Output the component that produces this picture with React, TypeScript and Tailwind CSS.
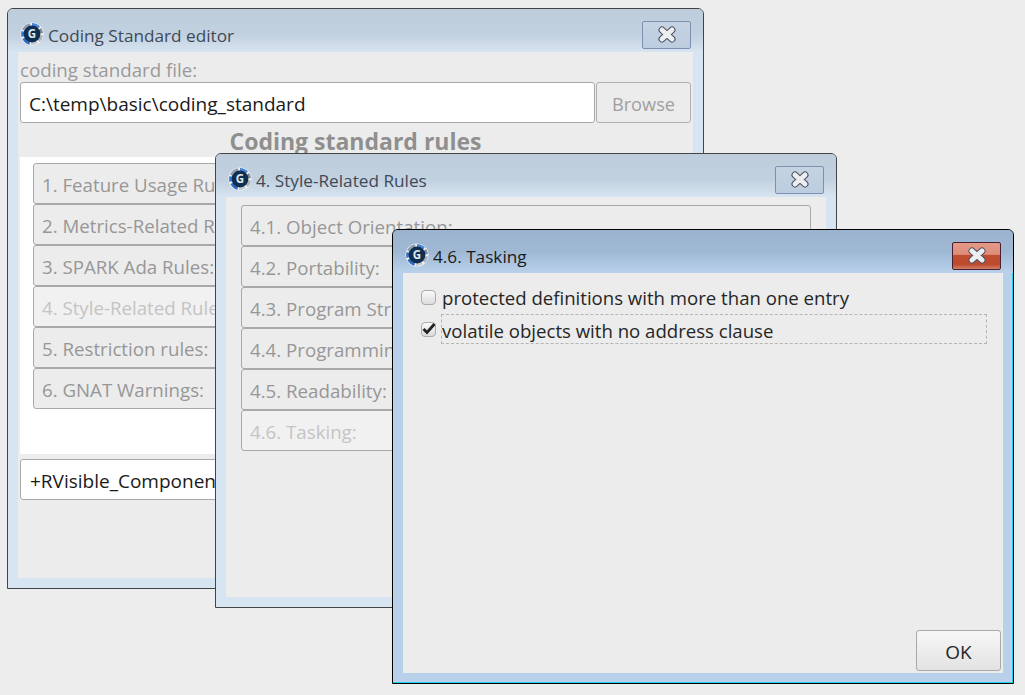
const FONT = "font-['Open_Sans','Noto_Sans',sans-serif]";

function GnatIcon() {
  return (
    <svg width="24" height="24" viewBox="0 0 24 24" className="shrink-0">
      <circle cx="12" cy="12" r="11.5" fill="#f0f3f6" />
      <path d="M1.5 15 A11 11 0 0 1 1.5 9 L5 10 A7.5 7.5 0 0 0 5 14 Z" fill="#3f74c4" />
      <path d="M2 7.5 A11 11 0 0 1 10 1.2 L10.8 4.6 A7.5 7.5 0 0 0 5 9 Z" fill="#8f9dac" />
      <path d="M12 1 A11 11 0 0 1 20 4.5 L17.4 7 A7.5 7.5 0 0 0 12 4.5 Z" fill="#4a85d6" />
      <path d="M21 6 A11 11 0 0 1 23 11 L19.5 11.4 A7.5 7.5 0 0 0 18.4 8 Z" fill="#7d8894" />
      <path d="M23 13.5 A11 11 0 0 1 19.8 20 L17.5 17.4 A7.5 7.5 0 0 0 19.4 13 Z" fill="#aab2ba" />
      <path d="M18 21 A11 11 0 0 1 11 23 L11.2 19.5 A7.5 7.5 0 0 0 16 18.4 Z" fill="#c3c9cf" />
      <path d="M9.5 22.7 A11 11 0 0 1 2.4 17 L5.4 15.4 A7.5 7.5 0 0 0 10 19.2 Z" fill="#2f6cc4" />
      <circle cx="12" cy="12" r="8.4" fill="#0f2f50" />
      <text x="12" y="16" textAnchor="middle" fontSize="11.5" fontWeight="700" fill="#dfe8f0" fontFamily="Open Sans">
        G
      </text>
    </svg>
  );
}

function CloseButton({ danger }: { danger?: boolean }) {
  return (
    <div
      className={
        danger
          ? "flex h-[28px] w-[49px] items-center justify-center rounded-[2px] border border-[#4a1f33] bg-[linear-gradient(#e39a88_0%,#dd8c79_44%,#bf4e30_46%,#bd4a2d_82%,#d08069_100%)]"
          : "flex h-[28px] w-[49px] items-center justify-center rounded-[2px] border border-[#7f8fb0] bg-[linear-gradient(#c5d3e2,#bccde0)]"
      }
    >
      <svg width="20" height="17" viewBox="0 0 20 17">
        <path d="M5 4 L15 13 M15 4 L5 13" stroke="#4b4f63" strokeWidth="7" strokeLinecap="round" fill="none" />
        <path d="M5 4 L15 13 M15 4 L5 13" stroke="#eceeef" strokeWidth="5" strokeLinecap="round" fill="none" />
      </svg>
    </div>
  );
}

function Win({
  title,
  active,
  className,
  children,
}: {
  title: string;
  active?: boolean;
  className: string;
  children: React.ReactNode;
}) {
  return (
    <section
      className={`absolute flex flex-col rounded-t-[6px] border ${
        active
          ? "border-black bg-[#b9d0ea] shadow-[inset_-1px_-1px_0_#25cfe8]"
          : "border-[#444444] bg-[#d7e4f1]"
      } ${className}`}
    >
      <header
        className={`flex h-[43px] shrink-0 items-center rounded-t-[5px] pr-[12px] pt-[8px] ${
          active
            ? "bg-[linear-gradient(#9bb3cf_0%,#9fb8d4_50%,#b9d1ea_100%)]"
            : "bg-[linear-gradient(#bdcddc_0%,#c2d1e0_60%,#d7e4f1_100%)]"
        }`}
      >
        <div className="ml-[12px] flex flex-1 items-center gap-[4px]">
          <GnatIcon />
          <span className={`pt-[3px] text-[17.2px] ${active ? "text-[#1a1a1a]" : "text-[#3f4a55]"}`}>{title}</span>
        </div>
        <CloseButton danger={active} />
      </header>
      <div className="mx-[10px] mb-[10px] flex min-h-0 flex-1 flex-col bg-[#ececec]">{children}</div>
    </section>
  );
}

function RuleButton({ label, off }: { label: string; off?: boolean }) {
  return (
    <div
      className={`flex h-[41px] shrink-0 items-center rounded-[3px] border border-[#a9a9a9] pl-[8px] pt-[4px] text-[18.7px] ${
        off ? "bg-[#f1f1f1] text-[#c4c4c4]" : "bg-[#ececec] text-[#979797]"
      }`}
    >
      {label}
    </div>
  );
}

function Check({ checked }: { checked?: boolean }) {
  return (
    <span className="relative h-[15px] w-[15px] shrink-0 rounded-[4px] border border-[#ababab] bg-[linear-gradient(#fafafa,#dcdcdc)]">
      {checked && (
        <svg width="15" height="15" viewBox="0 0 15 15" className="absolute left-[-1px] top-[-2px]">
          <path d="M2.5 8 L6 11.5 L13.5 3" stroke="#222222" strokeWidth="2.8" fill="none" />
        </svg>
      )}
    </span>
  );
}

const topRules = [
  "1. Feature Usage Rules:",
  "2. Metrics-Related Rules:",
  "3. SPARK Ada Rules:",
  "4. Style-Related Rules:",
  "5. Restriction rules:",
  "6. GNAT Warnings:",
];

const styleRules = [
  "4.1. Object Orientation:",
  "4.2. Portability:",
  "4.3. Program Structure:",
  "4.4. Programming Practice:",
  "4.5. Readability:",
  "4.6. Tasking:",
];

export default function App() {
  return (
    <main className={`relative h-[695px] w-[1025px] overflow-hidden bg-[#ededed] ${FONT}`}>
      <Win title="Coding Standard editor" className="left-[7px] top-[8px] h-[581px] w-[697px]">
        <div className="flex flex-1 flex-col px-[2px]">
          <div className="h-[30px] pt-[5px] text-[18.7px] leading-[26px] text-[#9a9a9a]">coding standard file:</div>
          <div className="flex h-[41px] gap-px">
            <div className="flex flex-1 items-center rounded-[3px] border border-[#a9a9a9] bg-white pl-[8px] pt-[4px] text-[19px] text-[#1a1a1a]">
              C:\temp\basic\coding_standard
            </div>
            <div className="flex w-[95px] items-center justify-center rounded-[3px] border border-[#b0b0b0] bg-[#ececec] pt-[4px] text-[18.2px] text-[#a0a0a0]">
              Browse
            </div>
          </div>
          <div className="flex h-[34px] items-center justify-center pt-[2px] text-[23px] font-bold text-[#8f8f8f]">
            Coding standard rules
          </div>
          <div className="flex h-[297px] flex-col bg-white pl-[13px] pr-[10px] pt-[6px]">
            {topRules.map((r, i) => (
              <RuleButton key={r} label={r} off={i === 3} />
            ))}
          </div>
          <div className="mt-[5px] flex h-[41px] items-center rounded-[3px] border border-[#a9a9a9] bg-white pl-[9px] pt-[4px] text-[19px] text-[#1a1a1a]">
            +RVisible_Components
          </div>
        </div>
      </Win>

      <Win title="4. Style-Related Rules" className="left-[215px] top-[153px] h-[455px] w-[622px]">
        <div className="flex flex-col px-[15px] pt-[8px]">
          {styleRules.map((r, i) => (
            <RuleButton key={r} label={r} off={i === 5} />
          ))}
        </div>
      </Win>

      <Win title="4.6. Tasking" active className="left-[392px] top-[229px] h-[455px] w-[622px]">
        <div className="flex flex-1 flex-col pl-[18px] pr-[3px] pt-[9px]">
          <div className="flex h-[30px] items-center">
            <Check />
            <span className="ml-[6px] pt-[2px] text-[18.6px] text-[#262626]">protected definitions with more than one entry</span>
          </div>
          <div className="mt-[2px] flex h-[30px] items-center">
            <Check checked />
            <span className="ml-[5px] mr-[13px] flex h-full flex-1 items-center border border-dashed border-[#b5b5b5] pt-[4px] text-[18.6px] text-[#262626]">
              volatile objects with no address clause
            </span>
          </div>
          <button className="mb-[2px] mr-[-1px] mt-auto flex h-[41px] w-[85px] items-center justify-center self-end rounded-[3px] border border-[#a9a9a9] bg-[linear-gradient(#f7f7f7,#e3e3e3)] pt-[4px] text-[19px] text-[#262626]">
            OK
          </button>
        </div>
      </Win>
    </main>
  );
}
